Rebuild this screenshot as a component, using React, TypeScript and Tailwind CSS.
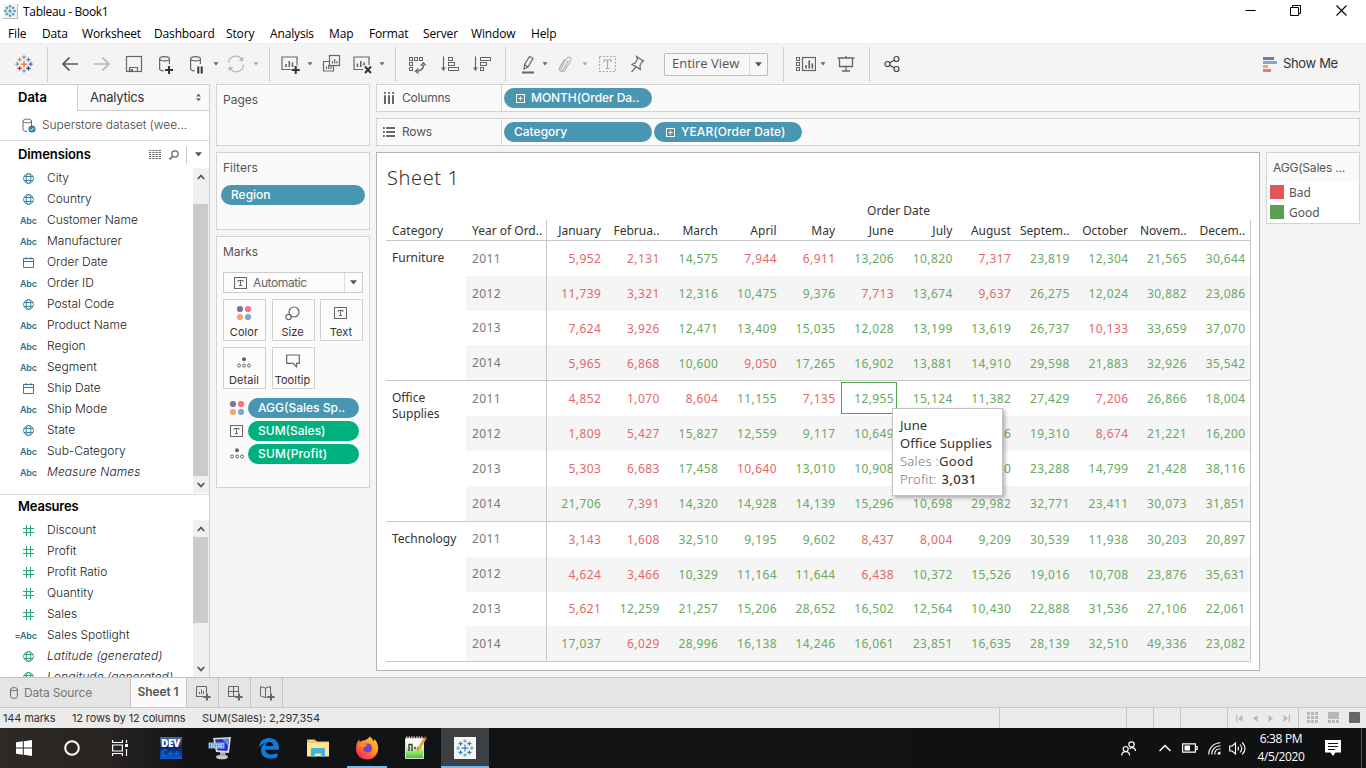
import React from "react";

const UI = "font-['Inter','Open_Sans',sans-serif]";

type P = { children?: React.ReactNode; c?: string; s?: number; w?: number };

function Ico({ children, c = "text-[#666]", s = 20, w }: P) {
  return (
    <svg className={`block shrink-0 ${c}`} width={w ?? s} height={s} viewBox={`0 0 ${w ?? s} ${s}`} fill="none" stroke="currentColor" strokeWidth="1.2">
      {children}
    </svg>
  );
}

const Caret = ({ m, c = "text-[#666]" }: { m: string; c?: string }) => (
  <svg className={`block shrink-0 ${m} ${c}`} width="6" height="4" viewBox="0 0 6 4"><path d="M0.5 0.3h5L3 3.6z" fill="currentColor" /></svg>
);
const BigCaret = ({ m = "" }: { m?: string }) => (
  <svg className={`block shrink-0 ${m}`} width="7" height="5" viewBox="0 0 7 5"><path d="M0 .3h7L3.500 4.500z" fill="#555" /></svg>
);
const Sep = ({ m }: { m: string }) => <div className={`w-px h-[35px] shrink-0 bg-[#cfcfcf] ${m}`} />;

function Sparkle({ colors }: { colors: string[] }) {
  const pts: [number, number, number][] = [
    [10, 10, 3.4], [10, 3.2, 1.9], [10, 16.8, 1.9], [3.2, 10, 1.9], [16.8, 10, 1.9],
    [5.6, 5.6, 2.2], [14.4, 5.6, 2.2], [5.6, 14.4, 2.2], [14.4, 14.4, 2.2],
  ];
  return (
    <>
      {pts.map(([x, y, r], i) => (
        <path key={i} d={`M${x - r} ${y}h${r * 2}M${x} ${y - r}v${r * 2}`} stroke={colors[i % colors.length]} strokeWidth="1.25" />
      ))}
    </>
  );
}
const multi = ["#e8762c", "#7199a6", "#8b93b8", "#7199a6", "#5b6591", "#eb912b", "#5b879b", "#c72037", "#1f457e"];

const Cyl = () => (
  <path d="M3.6 4.8v10c0 1.2 1.8 1.9 4 2.1M3.6 4.8c0-1.2 2.2-2.1 4.9-2.1s4.9.9 4.9 2.1-2.2 2.1-4.9 2.1-4.9-.9-4.9-2.1zM13.4 4.8v5.2" />
);
const Plus = ({ x, y }: { x: number; y: number }) => <path d={`M${x - 4} ${y}h8M${x} ${y - 4}v8`} stroke="#333" strokeWidth="2" />;
const TBox = () => (
  <Ico s={14}><rect x=".5" y="1.500" width="12" height="11" strokeWidth="1" /><path d="M4 5.800V4.500h5v1.300M6.500 4.500v5M5 9.500h3" strokeWidth="1" /></Ico>
);
const Dots = () => (
  <Ico s={16}>
    <g stroke="none"><circle cx="4" cy="4" r="3.1" fill="#84709b" /><circle cx="12" cy="4" r="3.1" fill="#fc7182" /><circle cx="4" cy="12" r="3.1" fill="#f1a57c" /><circle cx="12" cy="12" r="3.1" fill="#82a6cf" /></g>
  </Ico>
);
const Detail = () => (
  <Ico s={14}><circle cx="7" cy="3.2" r="2" fill="currentColor" stroke="none" /><circle cx="2" cy="9.5" r="1.5" strokeWidth="1" /><circle cx="7" cy="9.5" r="1.5" strokeWidth="1" /><circle cx="12" cy="9.5" r="1.5" strokeWidth="1" /></Ico>
);
const Squares = ({ pts }: { pts: [number, number, number][] }) => (
  <>{pts.map(([x, y, w], i) => <rect key={i} x={x} y={y} width={w} height="3" strokeWidth="1" />)}</>
);

function Toolbar() {
  return (
    <div className="h-[41px] shrink-0 bg-[#f4f4f4] border-t border-[#ececec] flex items-center">
      <div className="ml-[13.5px] mr-[0.5px]"><Ico><Sparkle colors={multi} /></Ico></div>
      <Sep m="ml-[13px]" />
      <div className="ml-3"><Ico c="text-[#555]"><path d="M3 10h15M9.500 3.500L3 10l6.500 6.500" strokeWidth="1.700" /></Ico></div>
      <div className="ml-3"><Ico c="text-[#b4b4b4]"><path d="M2 10h15M10.500 3.500L17 10l-6.500 6.500" strokeWidth="1.700" /></Ico></div>
      <div className="ml-3"><Ico><rect x="2.500" y="2.500" width="15" height="15" /><path d="M5.500 17.500v-4h8v4" /><rect x="6.500" y="15" width="2.500" height="2.500" fill="currentColor" stroke="none" /></Ico></div>
      <div className="ml-3"><Ico><Cyl /><Plus x={13} y={16} /></Ico></div>
      <div className="ml-2.5"><Ico><g transform="translate(1 0)"><Cyl /></g><path d="M12.300 12.500v7M15.700 12.500v7" stroke="#333" strokeWidth="2" /></Ico></div>
      <Caret m="ml-[7px]" />
      <div className="ml-[7px]"><Ico c="text-[#b8b8b8]"><path d="M2.500 9a7.200 7.200 0 0 1 13.500-3M17.500 10.500a7.200 7.200 0 0 1-13.500 3.500" strokeWidth="1.300" /><path d="M17.300 2.500v4.500h-4.500zM2.700 17.500V13h4.500z" fill="currentColor" stroke="none" /></Ico></div>
      <Caret m="ml-[7px]" c="text-[#aaa]" />
      <Sep m="ml-[10px]" />
      <div className="ml-[11px]"><Ico><path d="M10 15.500H1V3h15v8.500" /><path d="M5 13v-3M8.300 13V7M11.500 13V8.500" strokeWidth="1.600" /><Plus x={14.7} y={16} /></Ico></div>
      <Caret m="ml-1.5" />
      <div className="ml-2"><Ico><rect x="8.500" y="1.500" width="10" height="10" /><path d="M8 7.500H2.500v9.500h10v-5" /><path d="M5.500 15v-2.500M7.700 15v-4M10 15v-3M11.500 9.500V7M13.700 9.500V5M16 9.500V7" /></Ico></div>
      <div className="ml-3"><Ico><path d="M10 15.500H1V3h15v8" /><path d="M4.500 13V9.500M7.800 13V7M11 11.500V8.500" strokeWidth="1.600" /><path d="M12 12.500l6 6.500M18 12.500l-6 6.500" stroke="#333" strokeWidth="2" /></Ico></div>
      <Caret m="ml-1.5" />
      <Sep m="ml-[10px]" />
      <div className="ml-[11px]"><Ico><Squares pts={[[2.5, 3.5, 3], [7.5, 3.5, 3], [12.5, 3.5, 3], [2.5, 8.5, 3], [2.5, 13.5, 3]]} /><path d="M16.500 10.500c0 4-2.500 6.500-7 6.700" strokeWidth="1.400" /><path d="M13.800 11.700l2.700-3 2.300 3M11.500 14.500l-3 2.700 3 2.300" strokeWidth="1.300" /></Ico></div>
      <div className="ml-[13px]"><Ico><path d="M3.500 2.500v14" /><path d="M1 13.500h5L3.500 17z" fill="currentColor" stroke="none" /><Squares pts={[[8.5, 3.5, 4], [8.5, 8.5, 6], [8.5, 13.5, 10]]} /></Ico></div>
      <div className="ml-3"><Ico><path d="M3.500 2.500v14" /><path d="M1 13.500h5L3.500 17z" fill="currentColor" stroke="none" /><Squares pts={[[8.5, 3.5, 10], [8.5, 8.5, 6], [8.5, 13.5, 3]]} /></Ico></div>
      <Sep m="ml-[13px]" />
      <div className="ml-3"><Ico><path d="M4 18.500h12" strokeWidth="2" /><path d="M6 15l.5-4.500 5-8 3.500 2-5 8.500zM6.500 10.500l3.500 2.500" /></Ico></div>
      <Caret m="ml-1" />
      <div className="ml-[7px]"><Ico c="text-[#b4b4b4]"><path d="M13.500 6.500l-5 8.500c-.8 1.500-3 .3-2.200-1.200l5.500-9.500c1.500-2.500 5.500-.5 4 2.200L10 16c-2 3.500-7 .8-5.200-2.600l4.700-8" /></Ico></div>
      <Caret m="ml-[7px]" c="text-[#aaa]" />
      <div className="ml-[9px]"><Ico c="text-[#aaa]"><rect x="2.500" y="2.500" width="16" height="15" strokeDasharray="2 1.500" /><path d="M7 8V6h7v2M10.500 6v8.500M8.500 14.500h4" /></Ico></div>
      <div className="ml-[10px]"><Ico><path d="M9.500 2.500l7 4.500-1.500.8-2 3.500.3 4L5 10.300l3.500-1.500L10.500 5zM9.200 12.800L4.500 18" /></Ico></div>
      <div className="ml-[17px] w-[104px] h-[23px] border border-[#bdbdbd] rounded-[1px] bg-[#f7f7f7] flex items-center">
        <span className="flex-1 pl-[7px] pb-px text-[13px] text-[#555] tracking-[-0.02px] font-['Open_Sans',sans-serif] leading-none">Entire View</span>
        <div className="w-[18px] h-full border-l border-[#ddd] flex items-center justify-center"><BigCaret /></div>
      </div>
      <Sep m="ml-[15px]" />
      <div className="ml-3"><Ico><Squares pts={[[0.5, 3.5, 3], [0.5, 8.5, 3], [0.5, 13.5, 3]]} /><rect x="6.500" y="3.500" width="13" height="13" /><path d="M10 14.500V11M13.200 14.500v-8M16.300 14.500V9.500" strokeWidth="1.700" /></Ico></div>
      <Caret m="ml-1" />
      <div className="ml-2.5"><Ico><path d="M1.500 4h17M3.500 4v8.500h13V4M10 12.500v4.500M6 17h8M10 2v2" strokeWidth="1.300" /></Ico></div>
      <Sep m="ml-[13px]" />
      <div className="ml-3"><Ico c="text-[#444]"><circle cx="5.500" cy="10" r="2.500" /><circle cx="14.500" cy="5" r="2.500" /><circle cx="14.500" cy="15" r="2.500" /><path d="M7.700 8.800l4.600-2.600M7.700 11.200l4.600 2.600" /></Ico></div>
      <div className="ml-auto mr-[29px] flex items-center gap-1.5">
        <Ico s={15} w={14}><g stroke="none"><path d="M0 0h11v3H0z" fill="#84709b" /><path d="M0 4h14v3H0z" fill="#82a6cf" /><path d="M0 8h5v3H0z" fill="#f1a57c" /><path d="M0 12h8v3H0z" fill="#fc7182" /></g></Ico>
        <span className="text-[13px] text-[#333] leading-none w-[54px] pb-px whitespace-nowrap tracking-[-0.35px]">Show Me</span>
      </div>
    </div>
  );
}

const Globe = ({ c = "text-[#3a87a8]" }: { c?: string }) => (
  <Ico s={11} c={c}><circle cx="5.500" cy="5.500" r="4.900" strokeWidth="1" /><ellipse cx="5.500" cy="5.500" rx="2.300" ry="4.900" strokeWidth="1" /><path d="M1 3.500h9M1 7.500h9" strokeWidth="1" /></Ico>
);
const Cal = () => (
  <Ico s={11} c="text-[#2f7f9f]"><path d="M.5 1.500h10v9H.5zM.5 4.500h10M3 0v2.500M8 0v2.500" strokeWidth="1" /></Ico>
);
const Hash = () => <Ico s={11} c="text-[#2ca77b]"><path d="M3.500 0v11M7.500 0v11M0 3.500h11M0 7.500h11" strokeWidth="1" /></Ico>;

const dims: [string, string][] = [
  ["g", "City"], ["g", "Country"], ["a", "Customer Name"], ["a", "Manufacturer"], ["c", "Order Date"], ["a", "Order ID"],
  ["g", "Postal Code"], ["a", "Product Name"], ["a", "Region"], ["a", "Segment"], ["c", "Ship Date"], ["a", "Ship Mode"],
  ["g", "State"], ["a", "Sub-Category"], ["ai", "Measure Names"],
];
const meas: [string, string][] = [
  ["h", "Discount"], ["h", "Profit"], ["h", "Profit Ratio"], ["h", "Quantity"], ["h", "Sales"], ["e", "Sales Spotlight"],
  ["Gi", "Latitude (generated)"], ["Gi", "Longitude (generated)"],
];

function Field({ k, t }: { k: string; t: string }) {
  const abc = k[0] === "a" || k[0] === "e";
  return (
    <div className="h-[21px] flex items-center">
      <div className="w-[37px] flex justify-end">
        {abc ? (
          <span className="text-[9px] font-semibold text-[#2f7590] leading-none tracking-[-0.1px] pb-px">{k === "e" ? "=Abc" : "Abc"}</span>
        ) : (
          <div className="mr-[3px]">{k === "g" ? <Globe /> : k === "c" ? <Cal /> : k === "h" ? <Hash /> : <Globe c="text-[#2ca77b]" />}</div>
        )}
      </div>
      <span className={`ml-[10px] text-[12px] text-[#222] font-light leading-none whitespace-nowrap pb-px ${k[1] === "i" ? "italic tracking-[0.1px]" : "tracking-[0px]"}`}>{t}</span>
    </div>
  );
}

function Scroll({ top, thumb }: { top: string; thumb: string }) {
  return (
    <div className="w-[16px] h-full bg-[#f0f0f0] flex flex-col">
      <div className={`${top} shrink-0 flex justify-center pt-[5px]`}><Ico s={8} c="text-[#555]"><path d="M.8 6L4 2.500 7.200 6" strokeWidth="1.800" /></Ico></div>
      <div className={`${thumb} shrink-0 bg-[#cbcbcb] w-[15px]`} />
      <div className="mt-auto h-[17px] flex justify-center items-center"><Ico s={8} c="text-[#555]"><path d="M.8 2L4 5.500 7.200 2" strokeWidth="1.800" /></Ico></div>
    </div>
  );
}

function DataPane() {
  return (
    <div className="w-[210px] shrink-0 border-r border-[#cfcfcf] bg-white flex flex-col overflow-hidden">
      <div className="h-[27px] shrink-0 flex border-t border-[#cfcfcf]">
        <div className="w-[77px] pl-[18px] pb-px flex items-center text-[13px] font-semibold text-black leading-none">Data</div>
        <div className="flex-1 border-l border-b border-[#cfcfcf] bg-[#fafafa] pl-3 pr-2 flex items-center justify-between text-[13px] text-[#333] leading-none">
          <span className="tracking-[-0.25px]">Analytics</span>
          <svg width="5" height="9" viewBox="0 0 5 9" fill="#5b6b78"><path d="M0 3.500L2.500.5 5 3.500zM0 5.200h5L2.500 8.200z" /></svg>
        </div>
      </div>
      <div className="h-[30px] shrink-0 border-b border-[#ddd] flex items-center">
        <div className="ml-[22px]"><Ico s={15} w={14}><path d="M1 3v8.500c0 1.500 2 2 4 2M1 3c0-2.500 8.500-2.500 8.500 0S1 5.500 1 3zM9.500 3v5" strokeWidth="1" /><circle cx="10" cy="11" r="3.600" fill="#3a7f9f" stroke="none" /><path d="M8.300 11l1.300 1.300 2.200-2.500" stroke="#fff" strokeWidth="1" /></Ico></div>
        <span className="ml-1.5 pb-px text-[12px] font-light tracking-[-0.05px] text-[#444] leading-none whitespace-nowrap">Superstore dataset (wee...</span>
      </div>
      <div className="h-[27px] shrink-0 flex items-center">
        <span className="ml-[18px] text-[13px] font-semibold text-black leading-none tracking-[-0.1px] w-[131px]">Dimensions</span>
        <Ico s={10} w={12}><path d="M0 .5h12M0 2.500h12M0 4.500h12M0 6.500h12M0 8.500h12" strokeDasharray="2.250 1" strokeWidth="1" /></Ico>
        <div className="ml-2"><Ico s={10}><circle cx="6" cy="4" r="3.200" /><path d="M3.700 6.300L.5 9.500" strokeWidth="1.600" /></Ico></div>
        <div className="ml-[7px] h-[18px] w-px bg-[#ccc]" />
        <BigCaret m="ml-[8px]" />
      </div>
      <div className="h-[327px] shrink-0 flex justify-between border-b border-[#ddd] pb-[1px]">
        <div>{dims.map(([k, t]) => <Field key={t} k={k} t={t} />)}</div>
        <Scroll top="h-[36px]" thumb="h-[272px]" />
      </div>
      <div className="h-[25px] shrink-0 pl-[18px] flex items-center text-[13px] font-semibold text-black leading-none tracking-[-0.2px] pb-[3px]">Measures</div>
      <div className="flex-1 min-h-0 flex justify-between">
        <div className="overflow-hidden">{meas.map(([k, t]) => <Field key={t} k={k} t={t} />)}</div>
        <Scroll top="h-[17px]" thumb="h-[86px]" />
      </div>
    </div>
  );
}

const card = "border border-[#d4d4d4] bg-[#fafafa]";
const Pill = ({ children, c = "bg-[#4996b2]", w }: { children: React.ReactNode; c?: string; w: string }) => (
  <div className={`${c} ${w} h-5 rounded-full text-white font-medium text-[12px] leading-none flex items-center pl-[10px] pb-px whitespace-nowrap`}>{children}</div>
);
const Exp = () => <Ico s={9} c="text-white mr-1.5 ml-[2px] mt-px"><rect x=".5" y=".5" width="8" height="8" strokeWidth="1" /><path d="M2.500 4.500h4M4.500 2.500v4" strokeWidth="1" /></Ico>;

const MarkBtn = ({ icon, t }: { icon: React.ReactNode; t: string }) => (
  <div className="w-[43px] h-[42px] border border-[#d0d0d0] bg-[#fcfcfc] flex flex-col items-center pr-px">
    <div className="h-[26px] flex items-center justify-center">{icon}</div>
    <span className="text-[11px] text-[#333] leading-[13px] tracking-[0.05px]">{t}</span>
  </div>
);

function Cards() {
  const title = "text-[12px] text-[#555] leading-none pl-[6px]";
  return (
    <div className="w-[154px] shrink-0 ml-1.5 flex flex-col gap-1.5">
      <div className={`${card} h-[62px] pt-[9px]`}><div className={title}>Pages</div></div>
      <div className={`${card} h-[78px] pt-[9px]`}>
        <div className={title}>Filters</div>
        <div className="mt-[11px] ml-1"><Pill w="w-[144px]">Region</Pill></div>
      </div>
      <div className={`${card} h-[252px] pt-[9px]`}>
        <div className={title}>Marks</div>
        <div className="mt-[14px] ml-1.5 w-[140px] h-[21px] border border-[#ccc] bg-[#fcfcfc] flex items-center">
          <div className="ml-[10px]"><TBox /></div>
          <span className="ml-[5px] flex-1 text-[12px] text-[#666] leading-none tracking-[-0.4px]">Automatic</span>
          <div className="w-[18px] h-full border-l border-[#ddd] flex items-center justify-center"><BigCaret /></div>
        </div>
        <div className="mt-1.5 ml-1.5 grid grid-cols-[43px_43px_43px] gap-x-[5.5px] gap-y-1.5">
          <MarkBtn icon={<Dots />} t="Color" />
          <MarkBtn icon={<Ico s={15}><circle cx="9" cy="6" r="5" /><circle cx="3.500" cy="11" r="2.600" fill="#fff" /></Ico>} t="Size" />
          <MarkBtn icon={<TBox />} t="Text" />
          <MarkBtn icon={<div className="pt-1"><Detail /></div>} t="Detail" />
          <MarkBtn icon={<Ico s={14}><path d="M.7 1h12.600v8.300h-2.800v3.500L7 9.300H.7z" /></Ico>} t="Tooltip" />
        </div>
        <div className="mt-[9px] ml-[12px] grid grid-cols-[19px_111px] gap-y-[3px] items-center">
          <Dots /><Pill w="w-[111px]">AGG(Sales Sp..</Pill>
          <div className="pl-px"><TBox /></div><Pill w="w-[111px]" c="bg-[#00b180]">SUM(Sales)</Pill>
          <div className="pl-px"><Detail /></div><Pill w="w-[111px]" c="bg-[#00b180]"><span className="tracking-[0.15px]">SUM(Profit)</span></Pill>
        </div>
      </div>
    </div>
  );
}

const months = ["January", "Februa..", "March", "April", "May", "June", "July", "August", "Septem..", "October", "Novem..", "Decem.."];
const groups: { name: string; h: string; rows: number[][]; bad: string[] }[] = [
  { name: "Furniture", h: "h-[140px]", bad: ["0,1,3,4,7", "0,1,5,7", "0,1,9", "0,1,3"], rows: [
    [5952, 2131, 14575, 7944, 6911, 13206, 10820, 7317, 23819, 12304, 21565, 30644],
    [11739, 3321, 12316, 10475, 9376, 7713, 13674, 9637, 26275, 12024, 30882, 23086],
    [7624, 3926, 12471, 13409, 15035, 12028, 13199, 13619, 26737, 10133, 33659, 37070],
    [5965, 6868, 10600, 9050, 17265, 16902, 13881, 14910, 29598, 21883, 32926, 35542]] },
  { name: "Office Supplies", h: "h-[141px]", bad: ["0,1,2,4,9", "0,1,9", "0,1,3", "1"], rows: [
    [4852, 1070, 8604, 11155, 7135, 12955, 15124, 11382, 27429, 7206, 26866, 18004],
    [1809, 5427, 15827, 12559, 9117, 10649, 12190, 12646, 19310, 8674, 21221, 16200],
    [5303, 6683, 17458, 10640, 13010, 10908, 11342, 13420, 23288, 14799, 21428, 38116],
    [21706, 7391, 14320, 14928, 14139, 15296, 10698, 29982, 32771, 23411, 30073, 31851]] },
  { name: "Technology", h: "h-[140px]", bad: ["0,1,5,6", "0,1,5", "0", "1"], rows: [
    [3143, 1608, 32510, 9195, 9602, 8437, 8004, 9209, 30539, 11938, 30203, 20897],
    [4624, 3466, 10329, 11164, 11644, 6438, 10372, 15526, 19016, 10708, 23876, 35631],
    [5621, 12259, 21257, 15206, 28652, 16502, 12564, 10430, 22888, 31536, 27106, 22061],
    [17037, 6029, 28996, 16138, 14246, 16061, 23851, 16635, 28139, 32510, 49336, 23082]] },
];

function Tip() {
  return (
    <div className="absolute left-[52px] top-[27px] z-10 w-[111px] h-[88px] bg-white border border-[#c4c4c4] shadow-[2px_2px_4px_rgba(0,0,0,0.3)] pt-[7px] pl-[7px] text-left text-[13px] font-normal leading-[18px] text-[#333] whitespace-nowrap">
      <div className="tracking-[0.1px]">June</div>
      <div className="tracking-[0.08px]">Office Supplies</div>
      <div><span className="text-[#777] font-light tracking-[0.3px]">Sales :</span>Good</div>
      <div><span className="text-[#777] font-light tracking-[0.3px]">Profit: </span><span className="font-medium tracking-[0.4px] ml-px">3,031</span></div>
    </div>
  );
}

function Sheet() {
  return (
    <div className="w-[884px] h-[519px] shrink-0 border border-[#b4b4b4] bg-white font-['Noto_Sans','Open_Sans',sans-serif] text-[12px] text-[#333]">
      <div className="h-[50px] pl-[10px] pt-[12px] text-[20px] font-light leading-[26px] tracking-[0.6px] text-[#333]">Sheet 1</div>
      <div className="h-[17px] ml-[170px] w-[703px] text-center leading-[16px]">Order Date</div>
      <div className="ml-[9px] w-[865px]">
        <div className="h-[21px] flex border-b border-[#c8c8c8] leading-[22px]">
          <div className="w-[80px] pl-1.5">Category</div>
          <div className="w-[80px] pl-1.5 whitespace-nowrap">Year of Ord..</div>
          <div className="w-[705px] h-[21px] grid grid-cols-12 border-x border-[#c8c8c8] text-right">
            {months.map((m) => <div key={m} className="pr-[4.8px]">{m}</div>)}
          </div>
        </div>
        {groups.map((g, gi) => (
          <div key={g.name} className={`${g.h} flex border-b border-[#c8c8c8]`}>
            <div className="w-[80px] pl-1.5 pr-4 pt-[9px] leading-4">{g.name}</div>
            <div className="flex-1 flex flex-col">
              {g.rows.map((r, ri) => (
                <div key={ri} className={`flex-1 flex items-stretch ${ri % 2 ? "bg-[#f5f5f5]" : ""}`}>
                  <div className={`w-[80px] pl-1.5 flex items-center text-[#787878] tracking-[0.35px] ${gi === 0 ? "pt-px" : ""}`}>{2011 + ri}</div>
                  <div className="w-[705px] grid grid-cols-12 border-x border-[#c8c8c8]">
                    {r.map((v, ci) => {
                      const hit = gi === 1 && ri === 0 && ci === 5;
                      const bad = g.bad[ri].split(",").includes(String(ci));
                      return (
                        <div key={ci} className={`relative flex items-center justify-end pr-[4.4px] tracking-[0.4px] ${gi === 0 ? "pt-[2px]" : "pt-px"} ${bad ? "text-[#e4676a]" : "text-[#68a95f]"}`}>
                          {v.toLocaleString("en-US")}
                          {hit && <div className="absolute left-px top-px w-[56px] h-[32px] border border-[#59a14f]" />}
                          {hit && <Tip />}
                        </div>
                      );
                    })}
                  </div>
                </div>
              ))}
            </div>
          </div>
        ))}
      </div>
    </div>
  );
}

function Shelf({ icon, t, children }: { icon: React.ReactNode; t: string; children: React.ReactNode }) {
  return (
    <div className={`${card} h-[28px] shrink-0 flex items-center`}>
      <div className="w-[125px] h-full border-r border-[#d4d4d4] flex items-center pl-1.5">
        {icon}<span className="ml-[7px] text-[12px] text-[#555] leading-none tracking-[-0.2px]">{t}</span>
      </div>
      <div className="ml-[2px] flex gap-[2px]">{children}</div>
    </div>
  );
}

function Main() {
  return (
    <div className="w-[984px] shrink-0 ml-1.5 flex flex-col gap-1.5">
      <Shelf t="Columns" icon={<Ico s={12}><path d="M2 0v1.800M6 0v1.800M10 0v1.800M2 3.200V12M6 3.200V12M10 3.200V12" strokeWidth="2" /></Ico>}>
        <Pill w="w-[148px]"><Exp /><span className="tracking-[-0.05px]">MONTH(Order Da..</span></Pill>
      </Shelf>
      <Shelf t="Rows" icon={<Ico s={12}><path d="M0 2h1.800M0 6h1.800M0 10h1.800M3.200 2H12M3.200 6H12M3.200 10H12" strokeWidth="2" /></Ico>}>
        <Pill w="w-[148px]">Category</Pill>
        <Pill w="w-[148px]"><Exp /><span className="tracking-[0.1px]">YEAR(Order Date)</span></Pill>
      </Shelf>
      <div className="flex gap-1.5 items-start">
        <Sheet />
        <div className="w-[94px] h-[72px] border border-[#d4d4d4] bg-white text-[12px] text-[#555]">
          <div className="h-[29px] bg-[#fafafa] pl-[6px] flex items-center leading-none whitespace-nowrap tracking-[-0.2px]">AGG(Sales ...</div>
          <div className="flex items-center h-5 pl-[3px] gap-[5px] leading-none font-['Noto_Sans',sans-serif]"><div className="w-[14px] h-[14px] bg-[#e15759]" /><span className="pt-[2px]">Bad</span></div>
          <div className="flex items-center h-5 pl-[3px] gap-[5px] leading-none font-['Noto_Sans',sans-serif]"><div className="w-[14px] h-[14px] bg-[#59a14f]" /><span className="pt-[2px]">Good</span></div>
        </div>
      </div>
    </div>
  );
}

function Footer() {
  const newTab = "w-8 h-full border-r border-[#c4c4c4] flex items-center justify-center";
  const seg = "h-full border-l border-[#c8c8c8]";
  return (
    <>
      <div className="h-[30px] shrink-0 bg-[#e5e5e5] border-t border-[#c4c4c4] flex items-center">
        <div className="w-[131px] h-full border-r border-[#c4c4c4] flex items-center pl-[10px]">
          <Ico s={12} w={8}><path d="M.6 2.200v7.600c0 2 6.800 2 6.800 0V2.200M.6 2.200c0-2 6.800-2 6.800 0s-6.800 2-6.800 0z" strokeWidth="1" /></Ico>
          <span className="ml-1.5 text-[12px] text-[#777] leading-none tracking-[-0.15px]">Data Source</span>
        </div>
        <div className="w-14 h-full bg-[#fafafa] border-r border-[#c4c4c4] pb-[2px] pr-px flex items-center justify-center text-[12px] font-semibold text-[#555] leading-none whitespace-nowrap tracking-[-0.1px]">Sheet 1</div>
        <div className={newTab}><Ico s={16}><path d="M9 11.500H1.500v-10h10v6.500M4.500 9V7M6.500 9V4.500M8.500 9V6" strokeWidth="1" /><path d="M8.500 12h7M12 8.500v7" strokeWidth="2" /></Ico></div>
        <div className={newTab}><Ico s={16}><path d="M9 11.500H1.500v-10h10v6.500M6.500 1.500v10M1.500 6.500h10" strokeWidth="1" /><path d="M8.500 12h7M12 8.500v7" strokeWidth="2" /></Ico></div>
        <div className={newTab}><Ico s={16}><path d="M1.500 1.500l5 1.500 5-1.500v6.500M1.500 1.500v9.500l5 1.500V3M6.500 12.500l2-.5" strokeWidth="1" /><path d="M8.500 12h7M12 8.500v7" strokeWidth="2" /></Ico></div>
      </div>
      <div className="h-[21px] shrink-0 bg-[#ebebeb] border-t border-[#c8c8c8] flex items-center text-[11px] text-[#333] leading-none tracking-[-0.15px]">
        <span className="ml-[3px] w-[69px]">144 marks</span>
        <span className="w-[130px]">12 rows by 12 columns</span>
        <span className="tracking-[-0.05px]">SUM(Sales): 2,297,354</span>
        <div className={`${seg} ml-auto w-[127px]`} />
        <div className={`${seg} w-[27px]`} />
        <div className={`${seg} w-[27px]`} />
        <div className={`${seg} w-[47px]`} />
        <div className={`${seg} w-[71px] flex items-center justify-between px-[8px]`}>
          <Ico s={7} c="text-[#b8b8b8]"><path d="M.7 0v7" /><path d="M6.500 0v7L2 3.500z" fill="currentColor" stroke="none" /></Ico>
          <Ico s={7} c="text-[#b8b8b8]"><path d="M5.500 0v7L1 3.500z" fill="currentColor" stroke="none" /></Ico>
          <Ico s={7} c="text-[#b8b8b8]"><path d="M1.500 0v7L6 3.500z" fill="currentColor" stroke="none" /></Ico>
          <Ico s={7} c="text-[#b8b8b8]"><path d="M6.300 0v7" /><path d="M.5 0v7L5 3.500z" fill="currentColor" stroke="none" /></Ico>
        </div>
        <div className={`${seg} w-[68px] flex items-center gap-[10px] pl-2 pb-px`}>
          <Ico s={11} c="text-[#b8b8b8]"><path d="M0 1.500h11M0 5.500h11M0 9.500h11" strokeWidth="3" strokeDasharray="3 1" /></Ico>
          <Ico s={11} c="text-[#b8b8b8]"><path d="M0 3.500h11" strokeWidth="7" /><path d="M0 9.500h11" strokeWidth="3" strokeDasharray="3 1" /></Ico>
          <div className="w-[11px] h-[11px] bg-[#666] rounded-[1px]" />
        </div>
      </div>
    </>
  );
}

const Slot = ({ children, c = "w-[49px]" }: { children: React.ReactNode; c?: string }) => (
  <div className={`h-full shrink-0 flex items-center justify-center ${c}`}>{children}</div>
);

function Taskbar() {
  return (
    <div className="h-10 shrink-0 bg-[linear-gradient(90deg,#2d2926_0px,#272422_110px,#121314_190px,#101113_100%)] flex items-center text-white font-['Open_Sans','Noto_Sans',sans-serif]">
      <div className="w-12 flex justify-center"><Ico s={16}><path d="M0 2.300l6.800-1v6.200H0zM7.800 1.200L16 0v7.500H7.800zM0 8.500h6.800v6.200l-6.800-1zM7.800 8.500H16V16l-8.200-1.200z" fill="#fff" stroke="none" /></Ico></div>
      <div className="w-12 flex justify-center"><Ico s={16} c="text-white"><circle cx="8" cy="8" r="6.800" strokeWidth="2" /></Ico></div>
      <div className="w-12 flex justify-center"><Ico s={16} c="text-white"><path d="M.6 0v2.500h9.800V0M.6 16v-2.500h9.800V16M.6 5h9.800v6H.6zM14.500 0v3M14.500 9v7" strokeWidth="1.200" /><path d="M13 4h3v3h-3z" fill="currentColor" stroke="none" /></Ico></div>
      <Slot c="ml-[2px] w-[49px]">
        <div className="w-[22px] h-[22px] bg-gradient-to-b from-[#4a6cad] via-[#0b2468] to-[#0b5fd0] flex flex-col items-center justify-center font-extrabold leading-[10px] text-[10px]">
          <span className="tracking-[-0.3px]">DEV</span><span className="text-[#0f66c8] tracking-[0.2px]">C++</span>
        </div>
      </Slot>
      <Slot>
        <svg width="24" height="24" viewBox="0 0 24 24"><ellipse cx="14" cy="21" rx="6" ry="2.300" fill="#c9c9c9" /><path d="M12 16h5l1 4h-6z" fill="#aaa" /><path d="M5 2l18-1-2 16-13-1z" fill="#dcdcd8" /><path d="M7 3.500l14-.8-1.600 12.300-10-.8z" fill="#1c2fc4" /><path d="M14 3l7-.3-1 7z" fill="#6d88f0" /><rect x="1" y="7" width="15" height="5" fill="#4a9be0" stroke="#d8ecff" strokeWidth=".7" /><path d="M3 8.700h11M3 10.400h11" stroke="#d8ecff" strokeDasharray="1.500 .8" /></svg>
      </Slot>
      <Slot>
        <svg width="22" height="22" viewBox="0 0 22 22"><path d="M1 10.200C1.500 4.500 5.500 1 11 1c6 0 10 4.200 10 9.800v2H7.300c.2 3 2.700 4.700 6 4.700 2.300 0 4.300-.6 6.200-1.700v4.300c-2 1-4.300 1.500-7 1.500-5.700 0-9.500-3.300-9.500-8.400 0-3.300 1.600-5.900 4.600-7.300C4.800 6.600 2.600 7.700 1 10.200zm6.500-1.300h7.800c0-2.400-1.500-3.800-3.900-3.800-2.100 0-3.500 1.500-3.900 3.800z" fill="#0f7ad8" /></svg>
      </Slot>
      <Slot>
        <svg width="22" height="20" viewBox="0 0 22 20"><path d="M0 1.500h8l2 2h12V17H0z" fill="#f5bb3d" /><path d="M0 4.500h22v14H0z" fill="#ffe594" /><path d="M4 19V11.500c0-1 .7-1.500 1.500-1.500h11c1 0 1.500.6 1.500 1.500V19h-3.700v-3.500H7.700V19z" fill="#3fb0e8" /><path d="M2 2.500h4" stroke="#fff3c0" /></svg>
      </Slot>
      <Slot>
        <div className="w-10 h-full border-b-2 border-[#76b9ed] flex items-center justify-center pt-0.5">
          <svg width="24" height="24" viewBox="0 0 24 24"><defs><linearGradient id="ff" x1="1" y1="0" x2=".2" y2="1"><stop offset="0" stopColor="#ffe33b" /><stop offset=".45" stopColor="#ff9420" /><stop offset="1" stopColor="#f5235b" /></linearGradient></defs><path d="M14.500.5c2 1 3.300 3 3.600 4.500 1-.3 1.200-1 1.200-2 3 3 4.200 6.500 3.800 10.500C22.500 19.500 18 23.500 12 23.500 5.500 23.500 1 19 1 12.500c0-4 1.300-7 3.200-9 0 1.300.3 2 .8 2.600C6.300 4.800 7.500 4.600 9 4.600c2-1.300 4.500-1.400 5.500-4.100z" fill="url(#ff)" /><circle cx="12.500" cy="12" r="4.600" fill="#7542c8" /><path d="M5 8c2-1 5-.5 7.500 1.200-1.200 1.600-4.200 1-4.200 3.300C7 12 5 10.500 5 8z" fill="#ff8a1e" /></svg>
        </div>
      </Slot>
      <Slot>
        <svg width="23" height="24" viewBox="0 0 23 24"><defs><linearGradient id="np" x1="0" y1="0" x2="0" y2="1"><stop offset=".3" stopColor="#fafff0" /><stop offset="1" stopColor="#43c51c" /></linearGradient></defs><path d="M1.500 2.500h18v20h-18z" fill="url(#np)" stroke="#ddd" /><path d="M2 1.500h17" stroke="#ccc" strokeWidth="2" strokeDasharray="1.500 1" /><path d="M5 15V8.500h3V15M10 12h2M13 12h2" stroke="#333" strokeWidth="1.300" fill="none" /><path d="M21.500 1.500l-8 13.500" stroke="#e9a23a" strokeWidth="2.600" /><path d="M22 .8l-1 1.800" stroke="#b33" strokeWidth="2.600" /></svg>
      </Slot>
      <Slot c="ml-px w-[48px] bg-[#3c4043] border-b-2 border-[#76b9ed]">
        <div className="w-[22px] h-[22px] mt-0.5 mr-px bg-[#f6f6f4] flex items-center justify-center"><Ico><Sparkle colors={["#3b83b0", "#7aa9c4", "#7aa9c4", "#7aa9c4", "#7aa9c4", "#3b83b0", "#3b83b0", "#3b83b0", "#3b83b0"]} /></Ico></div>
      </Slot>
      <div className="ml-auto flex items-center h-full">
        <Ico s={15} c="text-white"><circle cx="10.500" cy="3.500" r="2.700" /><circle cx="4.700" cy="8" r="2.500" /><path d="M.8 14.500c0-5.300 7.800-5.300 7.800 0M8.500 7.500c3-2 5.800-.5 6 2.500" /></Ico>
        <div className="ml-[23px]"><Ico s={12} c="text-white"><path d="M.5 9L6 3.500 11.500 9" strokeWidth="1.500" /></Ico></div>
        <div className="ml-[11px]"><Ico s={10} w={16} c="text-white"><path d="M.6 .8h12.800v8.400H.6zM14 3.500h1.200v3H14" strokeWidth="1.200" /><path d="M2.500 2.500h5.500v5H2.500z" fill="currentColor" stroke="none" /></Ico></div>
        <div className="ml-[10px]"><Ico s={13} c="text-white"><path d="M.7 12.500C.7 6 6 .7 12.500.7M3.700 12.500c0-5 3.800-8.800 8.800-8.800M6.700 12.500c0-3.500 2.300-5.800 5.800-5.800" strokeWidth="1.100" /><path d="M9.500 12.500c0-2 1-3 3-3v3z" fill="currentColor" stroke="none" /></Ico></div>
        <div className="ml-[8px]"><Ico s={15} w={17} c="text-white"><path d="M.7 5v5h2.500L6.500 13V2L3.200 5zM8.700 5.500c1 1.300 1 2.700 0 4M11 3.500c2.200 2.500 2.200 5.500 0 8M13.200 1.500c3.600 3.800 3.600 8.200 0 12" strokeWidth="1.100" /></Ico></div>
        <div className="ml-[10px] w-[50px] text-center text-[12px] leading-[18px] tracking-[-0.35px] whitespace-nowrap"><div>6:38 PM</div><div>4/5/2020</div></div>
        <div className="ml-[19px]"><Ico s={16} c="text-white"><path d="M0 0h16v12.500h-5.500L8 16l-2.500-3.500H0z" fill="currentColor" stroke="none" /><path d="M3 3.500h10M3 6.500h10M3 9.500h7" stroke="#111" strokeWidth="1" /></Ico></div>
        <div className="ml-5 mr-1 w-px h-full bg-[#55585a]" />
      </div>
    </div>
  );
}

export default function App() {
  return (
    <div className={`w-[1366px] h-[768px] overflow-hidden flex flex-col bg-[#f4f4f4] ${UI}`}>
      <div className="h-[22px] shrink-0 bg-white flex items-center text-black font-['Open_Sans','Noto_Sans',sans-serif] text-[12px] leading-none">
        <div className="ml-[3px] w-[15px] h-[15px] bg-[#f3f3f3] border-r border-b border-[#bbb] flex items-center justify-center overflow-hidden">
          <svg width="14" height="14" viewBox="0 0 20 20"><Sparkle colors={["#2f7fae"]} /></svg>
        </div>
        <span className="ml-[5px] mt-0.5 tracking-[-0.3px]">Tableau - Book1</span>
        <div className="ml-auto mr-[19px] -mt-[2px] flex items-center">
          <Ico s={11} c="text-black"><path d="M.5 5.500h10" strokeWidth="1" /></Ico>
          <div className="ml-[34px]"><Ico s={11} c="text-black"><path d="M.5 2.500h8v8h-8zM2.500 2.500v-2h8v8h-2" strokeWidth="1" /></Ico></div>
          <div className="ml-[35px]"><Ico s={11} c="text-black"><path d="M.5 .5l10 10M10.500 .5l-10 10" strokeWidth="1.100" /></Ico></div>
        </div>
      </div>
      <div className="h-[21px] shrink-0 bg-white flex items-center text-black font-['Open_Sans','Noto_Sans',sans-serif] text-[12px] leading-none tracking-[-0.15px] pl-2 pt-[3px]">
        <span className="w-[34px]">File</span><span className="w-[40px]">Data</span><span className="w-[72px]">Worksheet</span><span className="w-[72px]">Dashboard</span>
        <span className="w-[44px]">Story</span><span className="w-[59px]">Analysis</span><span className="w-[40px]">Map</span><span className="w-[54px]">Format</span>
        <span className="w-[48px]">Server</span><span className="w-[60px]">Window</span><span>Help</span>
      </div>
      <Toolbar />
      <div className="h-[593px] shrink-0 flex overflow-hidden">
        <DataPane />
        <Cards />
        <Main />
      </div>
      <Footer />
      <Taskbar />
    </div>
  );
}
